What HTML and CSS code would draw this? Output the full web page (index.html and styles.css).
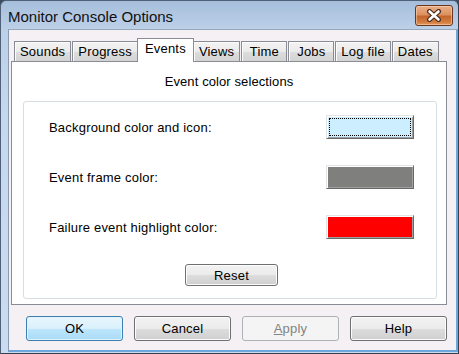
FILE: index.html
```html
<!DOCTYPE html>
<html lang="en">
<head>
    <meta charset="UTF-8">
    <title>Monitor Console Options</title>
    <link rel="stylesheet" href="styles.css">
</head>
<body>
    <div class="window">
        <div class="titlebar">
            <span class="title">Monitor Console Options</span>
            <div class="close-btn">
                <svg width="16" height="13" viewBox="0 0 16 13">
                    <path d="M3.5 2.5 L12.5 10.5 M12.5 2.5 L3.5 10.5" stroke="#4b2b1a" stroke-width="5" stroke-linecap="round" fill="none"/>
                    <path d="M3.5 2.5 L12.5 10.5 M12.5 2.5 L3.5 10.5" stroke="#ffffff" stroke-width="2.6" stroke-linecap="round" fill="none"/>
                </svg>
            </div>
        </div>

        <div class="client">
            <div class="tabs">
                <div class="tab">Sounds</div>
                <div class="tab">Progress</div>
                <div class="tab active">Events</div>
                <div class="tab">Views</div>
                <div class="tab">Time</div>
                <div class="tab">Jobs</div>
                <div class="tab">Log file</div>
                <div class="tab">Dates</div>
            </div>

            <div class="panel">
                <div class="panel-heading">Event color selections</div>
                <div class="group">
                    <div class="color-row">
                        <span>Background color and icon:</span>
                        <span class="swatch swatch-bg focused"></span>
                    </div>
                    <div class="color-row">
                        <span>Event frame color:</span>
                        <span class="swatch swatch-frame"></span>
                    </div>
                    <div class="color-row">
                        <span>Failure event highlight color:</span>
                        <span class="swatch swatch-fail"></span>
                    </div>
                    <div class="reset-row">
                        <button class="btn btn-reset">Reset</button>
                    </div>
                </div>
            </div>

            <div class="actions">
                <button class="btn btn-default">OK</button>
                <button class="btn">Cancel</button>
                <button class="btn" disabled><u>A</u>pply</button>
                <button class="btn">Help</button>
            </div>
        </div>
    </div>
</body>
</html>
```

FILE: styles.css
```css
* {
    box-sizing: border-box;
}

body {
    margin: 0;
    font-family: 'Liberation Sans', Arial, sans-serif;
    font-size: 13px;
    letter-spacing: 0.2px;
    color: #000;
    background: #3b4b5e;
}

.window {
    width: 459px;
    height: 354px;
    display: flex;
    flex-direction: column;
    padding: 0 0 1px 7px;
    border: 1px solid #4e6179;
    border-right-color: #33404f;
    border-bottom-color: #33404f;
    border-radius: 6px 6px 0 0;
    background: linear-gradient(#a6bedb 0px, #bcd0e8 28px, #c6d8ee 120px, #cbdcf0 354px);
}

.titlebar {
    height: 28px;
    display: flex;
    justify-content: space-between;
    align-items: flex-start;
}

.title {
    margin-top: 4px;
    line-height: 24px;
    font-size: 15px;
    letter-spacing: 0;
    color: #111;
}

.close-btn {
    width: 38px;
    height: 21px;
    margin: 4px 5px 0 0;
    display: flex;
    align-items: center;
    justify-content: center;
    border: 1px solid #6a3620;
    border-radius: 3px;
    background: linear-gradient(#e9b08c 0%, #dc915f 45%, #c4662c 55%, #d37d40 85%, #e29b62 100%);
    box-shadow: inset 0 0 0 1px rgba(255, 220, 190, 0.5);
}

.client {
    flex: 1;
    display: flex;
    flex-direction: column;
    background: #f4f0f4;
    border-left: 1px solid #8a9aae;
    border-top: 1px solid #98a8bc;
    border-right: 2px solid #6ea6dc;
    border-bottom: 2px solid #6ea6dc;
}

.tabs {
    display: flex;
    align-items: flex-end;
    gap: 1px;
    margin-top: 8px;
    padding-left: 5px;
    height: 23px;
}

.tab {
    height: 20px;
    min-width: 46px;
    padding: 0 5px;
    line-height: 19px;
    text-align: center;
    white-space: nowrap;
    border: 1px solid #898c95;
    border-bottom: none;
    background: linear-gradient(#f3f3f3 0%, #ebebeb 50%, #dddddd 51%, #d3d3d3 100%);
    box-shadow: inset 1px 1px 0 #fbfbfb;
}

.tab.active {
    position: relative;
    z-index: 1;
    height: 24px;
    margin: 0 -2px -1px;
    padding: 0 7px 4px;
    background: #fff;
    box-shadow: none;
}

.panel {
    height: 244px;
    margin: 0 9px 0 2px;
    border: 1px solid #898c95;
    background: #fff;
    display: flex;
    flex-direction: column;
}

.panel-heading {
    height: 39px;
    line-height: 39px;
    text-align: center;
    letter-spacing: 0.1px;
}

.group {
    margin: 0 9px 5px 11px;
    padding: 13px 22px 12px 25px;
    border: 1px solid #d5dfe5;
    border-radius: 3px;
    display: flex;
    flex-direction: column;
    gap: 26px;
}

.color-row {
    height: 24px;
    display: flex;
    justify-content: space-between;
    align-items: center;
}

.swatch {
    width: 88px;
    height: 24px;
    border: 1px solid;
    border-color: #e3e3e3 #696969 #696969 #e3e3e3;
    box-shadow: inset 1px 1px 0 #fff, inset -1px -1px 0 #a0a0a0;
}

.swatch-bg {
    background: #cdeefe;
}

.swatch-frame {
    background: #7f807d;
}

.swatch-fail {
    background: #ff0000;
}

.swatch.focused {
    outline: 1px dotted #000;
    outline-offset: -4px;
}

.reset-row {
    margin-top: -1px;
    display: flex;
    justify-content: center;
}

.btn {
    font-family: 'Liberation Sans', Arial, sans-serif;
    font-size: 13px;
    letter-spacing: 0.2px;
    color: #000;
    width: 97px;
    height: 25px;
    padding: 0;
    border: 1px solid #707070;
    border-radius: 3px;
    background: linear-gradient(#f2f2f2 0%, #ebebeb 50%, #dddddd 51%, #cfcfcf 100%);
    box-shadow: inset 0 0 0 1px #fcfcfc;
}

.btn-reset {
    width: 93px;
    height: 22px;
}

.btn-default {
    border-color: #3c7fb1;
    background: linear-gradient(#eaf6fd 0%, #d9f0fc 50%, #bee6fd 51%, #a9dbf6 100%);
    box-shadow: inset 0 0 0 1px #e2f3fc;
}

.btn:disabled {
    color: #838383;
    border-color: #adb2b5;
    background: #f4f4f4;
    box-shadow: none;
}

.actions {
    margin-top: 11px;
    padding: 0 9px 0 17px;
    display: flex;
    justify-content: space-between;
}
```
